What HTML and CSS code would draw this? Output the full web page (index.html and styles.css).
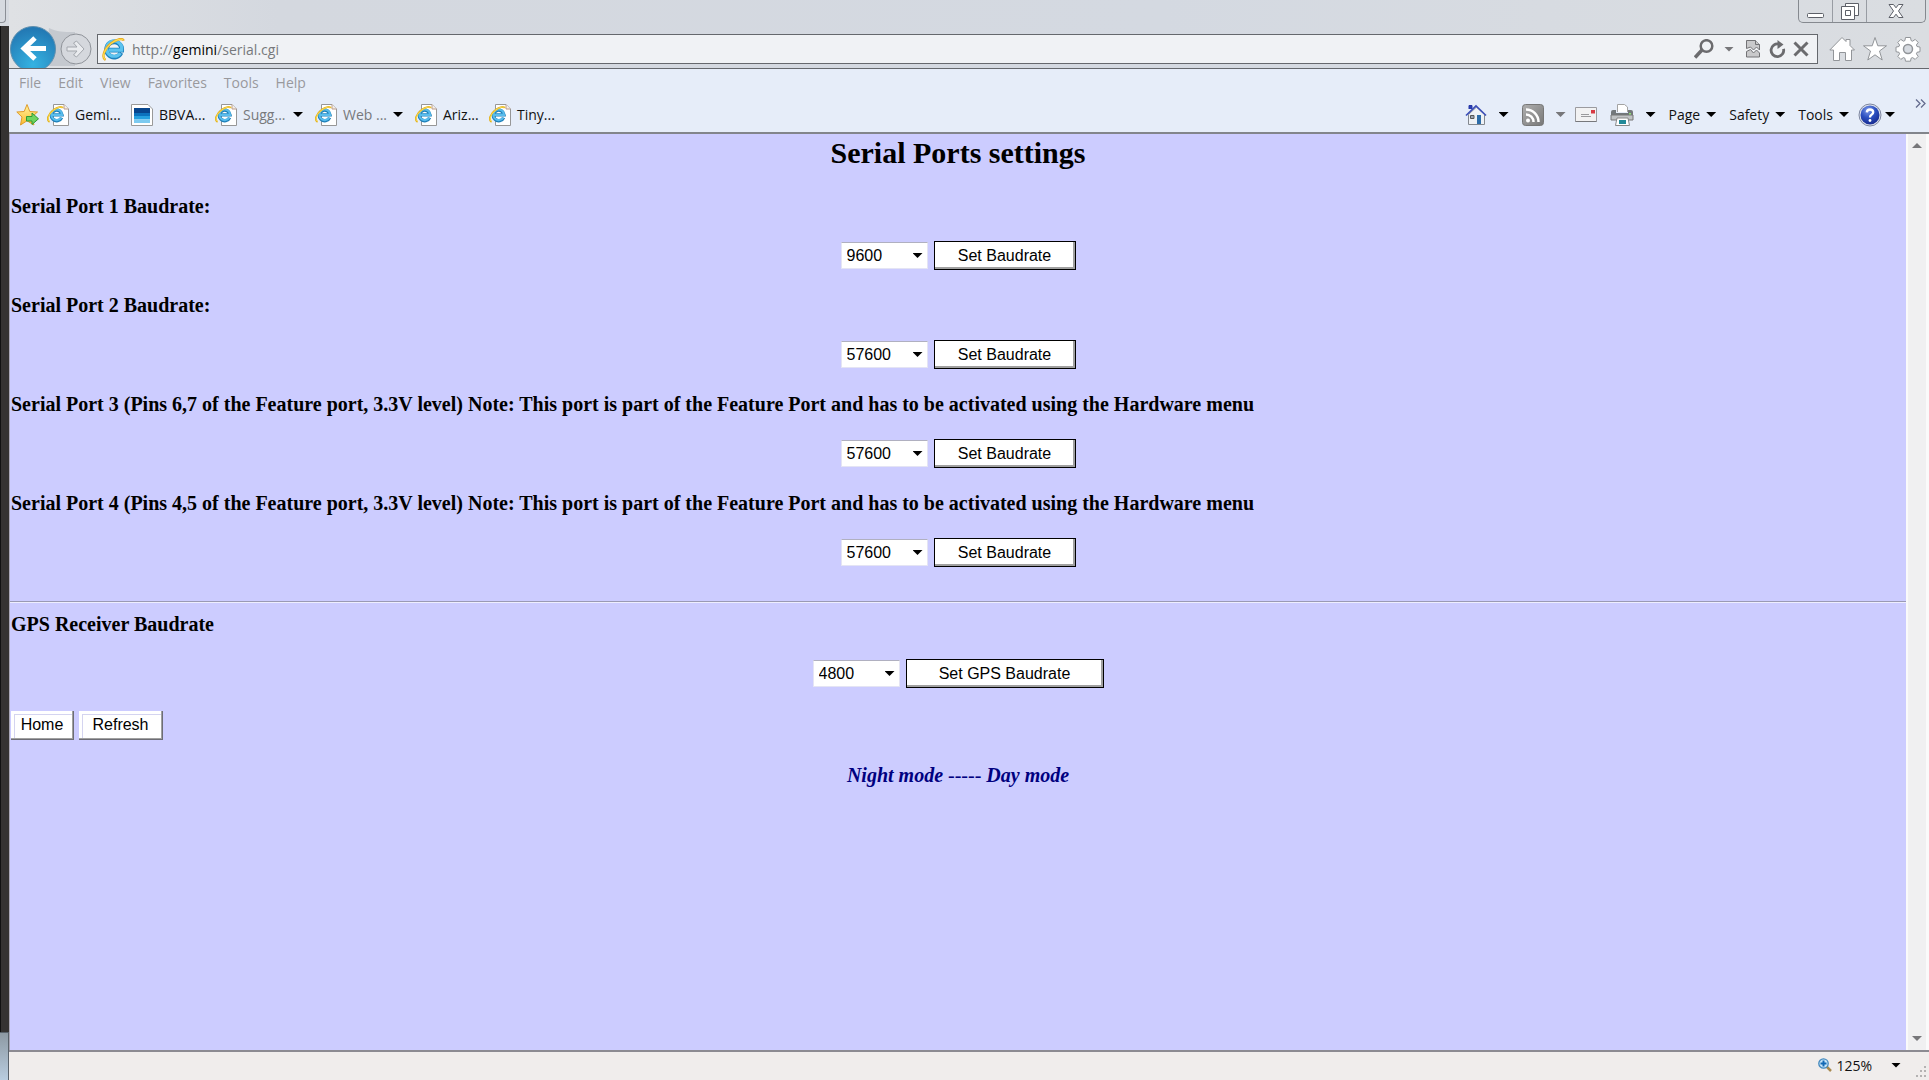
FILE: index.html
```html
<!DOCTYPE html>
<html lang="en">
<head>
<meta charset="utf-8">
<title>Serial Ports settings</title>
<link rel="stylesheet" href="styles.css">
</head>
<body>
<svg class="defs" aria-hidden="true">
  <defs>
    <radialGradient id="backFill" cx="50%" cy="85%" r="80%"><stop offset="0" stop-color="#35b3e2"/><stop offset="1" stop-color="#2379b4"/></radialGradient>
    <linearGradient id="starFill" x1="0" y1="0" x2="0" y2="1"><stop offset="0" stop-color="#fff3a0"/><stop offset="1" stop-color="#fbbc2c"/></linearGradient>
    <linearGradient id="rssFill" x1="0" y1="0" x2="1" y2="1"><stop offset="0" stop-color="#b0b0b0"/><stop offset="1" stop-color="#777"/></linearGradient>
    <radialGradient id="helpFill" cx="40%" cy="25%" r="80%"><stop offset="0" stop-color="#7e9ae8"/><stop offset=".5" stop-color="#2b4fc0"/><stop offset="1" stop-color="#16288c"/></radialGradient>
    <symbol id="ie" viewBox="0 0 22 22">
      <path d="M18.2 14.2A7.3 7.3 0 1 1 18.9 11.6H6.5" fill="none" stroke="#1d82bd" stroke-width="4.4"/>
      <path d="M17.6 14.4A7.3 7.3 0 1 1 18.8 11.6H6.5" fill="none" stroke="#5cc3ee" stroke-width="3"/>
      <path d="M3.4 21C-.8 18.600 2 10.500 8.500 5.200C13.500 1 19.800-.4 20.800 2.600" fill="none" stroke="#e8a81c" stroke-width="2.200"/>
      <path d="M3 20.500C-.5 17.800 2.500 10.500 8.500 5.400C13.500 1.400 18.500.3 20.300 2" fill="none" stroke="#fbdc50" stroke-width="1.100"/>
    </symbol>
    <symbol id="iepage" viewBox="0 0 22 22">
      <path d="M6.500.5H17L21.500 5V21.500H6.500Z" fill="#fff" stroke="#979797"/>
      <path d="M17 .5V5H21.500" fill="#f6eee8" stroke="#b89c8c"/>
      <path d="M14.600 13.600A5.300 5.300 0 1 1 15 10.900H5" fill="none" stroke="#1d7fb9" stroke-width="3.400"/>
      <path d="M14.200 13.600A5.300 5.300 0 1 1 15 10.900H5" fill="none" stroke="#58bcec" stroke-width="2.100"/>
      <path d="M2.600 18C-1 16 1.500 9.500 6.500 6C10.500 3 15 2 15.800 4" fill="none" stroke="#e2b01e" stroke-width="1.900"/>
      <path d="M2.600 17.500C-.5 16 1.800 10 6.500 6.200C10.500 3.200 14.500 2.300 15.500 3.800" fill="none" stroke="#fbe25c" stroke-width=".9"/>
    </symbol>
  </defs>
</svg>
<aside class="edge"><div class="edge-tab"></div><div class="edge-dark"></div><div class="edge-glass"></div></aside>
<div class="window">
  <header class="frame">
    <div class="titlebar">
      <div class="controls">
        <button class="ctl" type="button" aria-label="Minimize"><svg width="17" height="5"><rect x=".5" y=".5" width="16" height="4" rx="1" fill="#fff" stroke="#5d6068"/></svg></button>
        <button class="ctl" type="button" aria-label="Restore"><svg width="18" height="17" fill="#fff" stroke="#5d6068"><path d="M4.500.5H17.500V12.500H4.500Z"/><path d="M.5 3.500H13.500V16.500H.5ZM4.500 7.500V12.500H9.500V7.500Z" fill-rule="evenodd"/></svg></button>
        <button class="ctl wide" type="button" aria-label="Close"><svg width="16" height="14"><path d="M1 .5H5.500L8 3.800L10.500 .5H15L10.500 7L15 13.500H10.500L8 10.200L5.500 13.500H1L5.500 7Z" fill="#fff" stroke="#5d6068"/></svg></button>
      </div>
    </div>
    <div class="navbar">
      <button class="plain" type="button" aria-label="Back"><svg class="back" width="86" height="44" viewBox="0 0 86 44">
        <path d="M40 4C48 8 54 8 66 8V42H36Z" fill="#c5c9cf"/>
        <circle cx="24" cy="25" r="22.500" fill="url(#backFill)" stroke="#5f8fae"/>
        <path d="M37 24.500H16M26 14L15 24.500L26 35" fill="none" stroke="#fff" stroke-width="5"/>
        <circle cx="67" cy="25" r="15" fill="#d5d8dd" stroke="#8f9399"/>
        <path d="M58 23H68L64.500 19L67.500 17L75 25L67.500 33L64.500 31L68 27H58Z" fill="#e9ebee" stroke="#a3a7ad"/>
      </svg></button>
      <div class="address">
        <svg width="23" height="23"><use href="#ie"/></svg>
        <span class="url">http://<b>gemini</b>/serial.cgi</span>
        <svg width="20" height="20" fill="none" stroke="#6b6b6e"><circle cx="12.500" cy="7" r="5.800" stroke-width="2.500"/><path d="M8 11L1 18.500" stroke-width="3.500"/></svg>
        <i class="arrow gray url-arrow"></i>
        <svg class="compat" width="14" height="18" fill="#c9c9cb" stroke="#737376"><path d="M.5 8.500V.5H9.500L13.500 4.500V10L10.500 7L7.500 10L4.500 7Z"/><path d="M9.500.5V4.500H13.500M.5 17V11.500L4.500 9.500L7.500 13L10.500 10L13.500 13V17Z"/></svg>
        <svg width="17" height="18"><path d="M10 4.200A6.300 6.300 0 1 0 14.500 8.800" fill="none" stroke="#6b6b6e" stroke-width="2.800"/><path d="M8.500 0L14.500 4.500L8.500 9Z" fill="#6b6b6e"/></svg>
        <svg class="stop" width="16" height="16"><path d="M1.500 1.500L14.500 14.500M14.500 1.500L1.500 14.500" stroke="#6b6b6e" stroke-width="3"/></svg>
      </div>
      <div class="tools">
        <svg width="26" height="26" fill="#fff" stroke="#929599"><path d="M13 1.500L17 5.500V3.500H21V9.500L25.500 14H22.500V24.500H16.500V16.500H10.500V24.500H4.500V14H.8Z"/></svg>
        <svg width="26" height="26" fill="#fff" stroke="#929599"><path d="M13 1.500L15.800 9.800H24.500L17.500 15L20.200 24L13 18.800L5.800 24L8.500 15L1.500 9.800H10.200Z"/></svg>
        <svg width="26" height="26" viewBox="0 0 26 26"><g fill="#fff" stroke="#929599"><path d="M10.500 1.500h5l.6 3.100 1.500.6 2.600-1.800 3 3-1.800 2.600.6 1.500 3 .6v4.600l-3 .6-.6 1.500 1.800 2.600-3 3-2.600-1.800-1.500.6-.6 3h-5l-.6-3-1.500-.6-2.600 1.800-3-3 1.800-2.600-.6-1.500-3-.6v-4.600l3-.6.6-1.500-1.800-2.600 3-3 2.600 1.800 1.500-.6Z"/><circle cx="13" cy="13" r="4.500" fill="#d7dbe1" stroke-width="1.500"/></g></svg>
      </div>
    </div>
  </header>
  <nav class="menu">
    <a href="#">File</a><a href="#">Edit</a><a href="#">View</a><a href="#">Favorites</a><a href="#">Tools</a><a href="#">Help</a>
  </nav>
  <div class="favbar">
    <div class="favs">
      <button class="plain" type="button" aria-label="Add to favorites"><svg width="24" height="24"><path d="M11 1.500L13.800 8.500L21.500 9L15.800 14L18 22L11 17.800L4.500 22L6 14L.8 9L8.200 8.500Z" fill="url(#starFill)" stroke="#df9c2b" stroke-linejoin="round"/><path d="M10.500 13.500H16V10L22.500 15.800L16 21.500V18H10.500Z" fill="#6fd460" stroke="#2e9a35"/></svg></button>
      <a class="fav" href="#"><svg width="22" height="22"><use href="#iepage"/></svg><span>Gemi...</span></a>
      <a class="fav" href="#"><svg width="22" height="22"><path d="M.5.5H17L21.500 5V21.500H.5Z" fill="#fff" stroke="#999"/><path d="M3 4H19V9H3Z" fill="#07458d"/><path d="M3 9H19V12H3Z" fill="#0c72bd"/><path d="M3 12H19V15.500H3Z" fill="#25a0df"/><path d="M3 15.500H19V19H3Z" fill="#7ccaf0"/></svg><span>BBVA...</span></a>
      <a class="fav dim" href="#"><svg width="22" height="22"><use href="#iepage"/></svg><span>Sugg...</span><i class="arrow"></i></a>
      <a class="fav dim" href="#"><svg width="22" height="22"><use href="#iepage"/></svg><span>Web ...</span><i class="arrow"></i></a>
      <a class="fav short" href="#"><svg width="22" height="22"><use href="#iepage"/></svg><span>Ariz...</span></a>
      <a class="fav short" href="#"><svg width="22" height="22"><use href="#iepage"/></svg><span>Tiny...</span></a>
    </div>
    <div class="commands">
      <button class="cmd icon" type="button" aria-label="Home"><svg width="22" height="22"><path d="M3.500 10.500V20.500H19.500V10.500L11.500 3Z" fill="#eef1f5" stroke="#83888f"/><path d="M4 5V1.500H7V5" fill="#2b3db4" stroke="#2536a5"/><path d="M1 11.500L11 2L21 11.500" fill="none" stroke="#3c4fb8" stroke-width="1.700"/><path d="M12 11H16V20H12Z" fill="#2c6ca8"/><path d="M5.500 11.500H9V14.500H5.500Z" fill="#9aa5b5" stroke="#555"/></svg><i class="arrow"></i></button>
      <button class="cmd icon" type="button" aria-label="Feeds"><svg width="22" height="22"><rect x=".5" y=".5" width="21" height="21" rx="3" fill="url(#rssFill)" stroke="#777"/><circle cx="6" cy="16.500" r="2" fill="#fff"/><path d="M4 10.500A7.500 7.500 0 0 1 11.500 18M4 5.500A12.500 12.500 0 0 1 16.500 18" fill="none" stroke="#fff" stroke-width="2.500"/></svg><i class="arrow gray"></i></button>
      <button class="cmd mail" type="button" aria-label="Read mail"><svg width="22" height="16"><path d="M.5.5H21.500V14.500H.5Z" fill="#f2f2f3" stroke="#9b9b9f"/><path d="M.5 14.500H21.500" stroke="#77787c"/><path d="M16 3H20V6.500H16Z" fill="#d83a44"/><path d="M6 7.500H14M6 9.500H16" stroke="#9a9a9d"/></svg></button>
      <button class="cmd icon" type="button" aria-label="Print"><svg width="24" height="24"><path d="M7.500 9V1.500H14.500L17.500 4V9" fill="#fff" stroke="#a3a3a3"/><path d="M1 9Q1 7 3 7H6V10H18V7H21Q23 7 23 9V17H1Z" fill="#73787b"/><path d="M1 12H23V17H1Z" fill="#c0c3c5" stroke="#777"/><path d="M7 15H18L19.500 22.500H5.500Z" fill="#fff" stroke="#888"/><path d="M9 17H16V21H9Z" fill="#238a99"/><path d="M19 10H21V11.500H19Z" fill="#8be070"/></svg><i class="arrow"></i></button>
      <button class="cmd" type="button">Page<i class="arrow"></i></button>
      <button class="cmd" type="button">Safety<i class="arrow"></i></button>
      <button class="cmd" type="button">Tools<i class="arrow"></i></button>
      <button class="cmd help" type="button" aria-label="Help"><svg width="24" height="24"><circle cx="12" cy="12" r="11" fill="#dfe3ec" stroke="#7d86a0"/><circle cx="12" cy="12" r="9.500" fill="url(#helpFill)"/><path d="M8.800 9.300Q9 6.500 12 6.500T15.200 9.200Q15.200 10.800 13.500 11.800Q12 12.600 12 14.500" fill="none" stroke="#fff" stroke-width="2.300"/><circle cx="12" cy="17.500" r="1.400" fill="#fff"/></svg><i class="arrow"></i></button>
      <svg class="more" width="11" height="9"><path d="M1 .5L5 4.500L1 8.500M6 .5L10 4.500L6 8.500" fill="none" stroke="#646b8e" stroke-width="1.300"/></svg>
    </div>
  </div>
  <div class="viewport">
    <main class="page">
      <h1>Serial Ports settings</h1>
      <form class="port">
        <label for="p1">Serial Port 1 Baudrate:</label>
        <div class="row"><span class="pick"><select id="p1"><option>9600</option></select><i class="arrow"></i></span><button class="set" type="button">Set Baudrate</button></div>
      </form>
      <form class="port">
        <label for="p2">Serial Port 2 Baudrate:</label>
        <div class="row"><span class="pick"><select id="p2"><option>57600</option></select><i class="arrow"></i></span><button class="set" type="button">Set Baudrate</button></div>
      </form>
      <form class="port">
        <label for="p3">Serial Port 3 (Pins 6,7 of the Feature port, 3.3V level) Note: This port is part of the Feature Port and has to be activated using the Hardware menu</label>
        <div class="row"><span class="pick"><select id="p3"><option>57600</option></select><i class="arrow"></i></span><button class="set" type="button">Set Baudrate</button></div>
      </form>
      <form class="port">
        <label for="p4">Serial Port 4 (Pins 4,5 of the Feature port, 3.3V level) Note: This port is part of the Feature Port and has to be activated using the Hardware menu</label>
        <div class="row"><span class="pick"><select id="p4"><option>57600</option></select><i class="arrow"></i></span><button class="set" type="button">Set Baudrate</button></div>
      </form>
      <hr>
      <form class="port">
        <label for="gps">GPS Receiver Baudrate</label>
        <div class="row"><span class="pick"><select id="gps"><option>4800</option></select><i class="arrow"></i></span><button class="set gps" type="button">Set GPS Baudrate</button></div>
      </form>
      <div class="actions"><button class="act" type="button">Home</button><button class="act refresh" type="button">Refresh</button></div>
      <p class="modes"><a href="#">Night mode</a> ----- <a href="#">Day mode</a></p>
    </main>
    <div class="scroll"><i class="arrow gray up"></i><i class="arrow gray"></i></div>
  </div>
  <footer class="status">
    <button class="cmd zoom" type="button"><svg width="14" height="14"><path d="M8.500 8.500L13 13" stroke="#a88a50" stroke-width="2.500"/><circle cx="5.500" cy="5.500" r="4.700" fill="#c9e6f8" stroke="#4288bd" stroke-width="1.300"/><path d="M2.500 5.500H8.500M5.500 2.500V8.500" stroke="#1269b5" stroke-width="2"/></svg><span>125%</span><i class="arrow"></i></button>
    <svg class="grip" width="12" height="12" fill="#b4b2b2"><path d="M9 0h2v2h-2zM5 4h2v2h-2zM9 4h2v2h-2zM1 9h2v2h-2zM5 9h2v2h-2zM9 9h2v2h-2z"/></svg>
  </footer>
</div>
</body>
</html>
```
FILE: styles.css
```css
* { box-sizing: border-box; }

body {
  margin: 0;
  min-height: 100vh;
  display: flex;
  background: #d6dae0;
  font-family: "Open Sans", "Noto Sans", sans-serif;
  font-size: 14px;
  color: #111;
}

svg { display: block; flex: none; }
.defs { position: absolute; width: 0; height: 0; }
a { color: inherit; text-decoration: none; }
button { font: inherit; color: inherit; }

.plain, .cmd, .ctl {
  border: 0;
  padding: 0;
  background: none;
}

.arrow {
  display: block;
  flex: none;
  width: 10px;
  height: 5px;
  background: #000;
  clip-path: polygon(0 0, 100% 0, 50% 100%);
}
.arrow.gray { background: #77777a; }
.arrow.up { transform: rotate(180deg); }

/* sliver of the desktop to the left of the window */
.edge {
  width: 9px;
  flex: none;
  display: flex;
  flex-direction: column;
}
.edge-tab {
  height: 23px;
  width: 6px;
  margin-bottom: 3px;
  border: solid #8b8f96;
  border-width: 0 1px 1px 0;
  border-radius: 0 0 4px 0;
}
.edge-dark { flex: 1; background: #353332; border-left: 1px solid #111; }
.edge-glass {
  height: 48px;
  background: linear-gradient(#8d99a3, #b9cde0);
  border: solid #59626b;
  border-width: 1px 1px 0 0;
}

.window { flex: 1; min-width: 0; display: flex; flex-direction: column; }

.frame { background: linear-gradient(90deg, #dfe1e4, #d4d8df 14%, #d4d9e1 60%, #dadde1); }
.titlebar { height: 24px; display: flex; justify-content: flex-end; padding-right: 3px; }
.controls {
  display: flex;
  height: 23px;
  border: solid #85898f;
  border-width: 0 1px 1px;
  border-radius: 0 0 5px 5px;
}
.ctl {
  width: 34px;
  display: flex;
  align-items: center;
  justify-content: center;
  border-right: 1px solid #989ca3;
}
.ctl:first-child { align-items: end; padding-bottom: 4px; }
.ctl.wide { width: 58px; border: 0; }

.navbar {
  height: 45px;
  display: flex;
  align-items: center;
  padding-right: 8px;
  border-bottom: 1px solid #65686d;
}
.address {
  flex: 1;
  height: 30px;
  margin: 6px 11px 0 2px;
  padding: 0 8px 0 4px;
  display: flex;
  align-items: center;
  border: 1px solid #65686d;
  background: #f0f2f5;
}
.url { flex: 1; padding-left: 7px; color: #77797c; }
.url b { font-weight: 400; color: #000; }
.url-arrow { margin: 0 12px 0 10px; }
.compat { margin-right: 9px; }
.stop { margin-left: 7px; }
.tools { display: flex; gap: 7px; margin-top: 6px; }

.menu {
  height: 28px;
  display: flex;
  align-items: center;
  gap: 17px;
  padding: 0 0 2px 10px;
  background: #e6edf9;
  color: #99999d;
}

.favbar {
  height: 37px;
  display: flex;
  align-items: center;
  justify-content: space-between;
  background: #e6edf9;
  border-bottom: 2px solid #82858b;
  padding: 0 3px 0 7px;
}
.favs { display: flex; align-items: center; }
.favs .plain { margin-right: 7px; }
.fav { display: flex; align-items: center; gap: 6px; margin-right: 12px; white-space: nowrap; }
.fav span { width: 44px; }
.fav.short span { width: 34px; }
.dim { color: #77797c; }
.commands { display: flex; align-items: center; gap: 13px; }
.cmd { display: flex; align-items: center; gap: 6px; }
.cmd.icon { gap: 12px; }
.mail { margin-left: -4px; }
.help { gap: 3px; margin-left: -4px; }
.more { margin: 0 0 22px 7px; }

.viewport { flex: 1; display: flex; border-left: 1px solid #aaa8b8; background: #ccccff; }
.page {
  flex: 1;
  min-width: 0;
  padding: 2px 0 24px;
  font-family: "Liberation Serif", "Times New Roman", serif;
  font-size: 20px;
  line-height: 24px;
  color: #000;
}
.page h1 { margin: 0 0 24px; font-size: 30px; line-height: 34px; text-align: center; }
.port { margin-bottom: 23px; }
.port label { display: block; padding-left: 1px; font-weight: 700; }
.row { display: flex; justify-content: center; gap: 6px; margin-top: 23px; }
.page button, .page select { font-family: "Liberation Sans", Arial, sans-serif; font-size: 16px; }
.pick { display: grid; align-items: center; width: 87px; height: 27px; margin-top: 1px; }
.pick > * { grid-area: 1 / 1; }
.pick select {
  appearance: none;
  width: 100%;
  height: 100%;
  padding: 0 5px;
  border: 1px solid #e4e4f4;
  border-top-color: #b0b0c0;
  border-radius: 0;
  background: #fff;
  color: #000;
}
.pick .arrow { justify-self: end; margin-right: 5px; pointer-events: none; }
.set {
  width: 142px;
  height: 29px;
  padding: 0;
  border: 1px solid #000;
  background: #fff;
  box-shadow: inset -2px -2px #a0a0a0;
}
.set.gps { width: 198px; }
.page hr { margin: 34px 0 9px; border: solid; border-width: 1px 0; border-color: #9a9ab4 transparent #eeeeff; }
.actions { display: flex; gap: 5px; padding-left: 1px; }
.act {
  width: 63px;
  height: 29px;
  padding: 0;
  background: #fff;
  border: solid #6d6d75;
  border-width: 0 1px 1px 0;
  box-shadow: inset -1px -1px #a0a0a0, inset 3px 3px #fff, inset 4px 4px #d4d4f0;
}
.refresh { width: 84px; }
.modes { margin: 23px 0 0; text-align: center; font-style: italic; color: #000080; }
.modes a { font-weight: 700; }

.scroll {
  width: 23px;
  display: flex;
  flex-direction: column;
  align-items: center;
  justify-content: space-between;
  padding: 9px 0;
  background: #f0f0f1;
  border: solid #fafafa;
  border-width: 0 3px 0 2px;
}

.status {
  height: 30px;
  display: flex;
  align-items: center;
  justify-content: flex-end;
  border-top: 2px solid #8c8b92;
  background: #f0edec;
}
.zoom { gap: 4px; padding-bottom: 2px; }
.zoom span { margin-right: 15px; }
.grip { align-self: flex-end; margin: 0 2px 2px 14px; }
```
